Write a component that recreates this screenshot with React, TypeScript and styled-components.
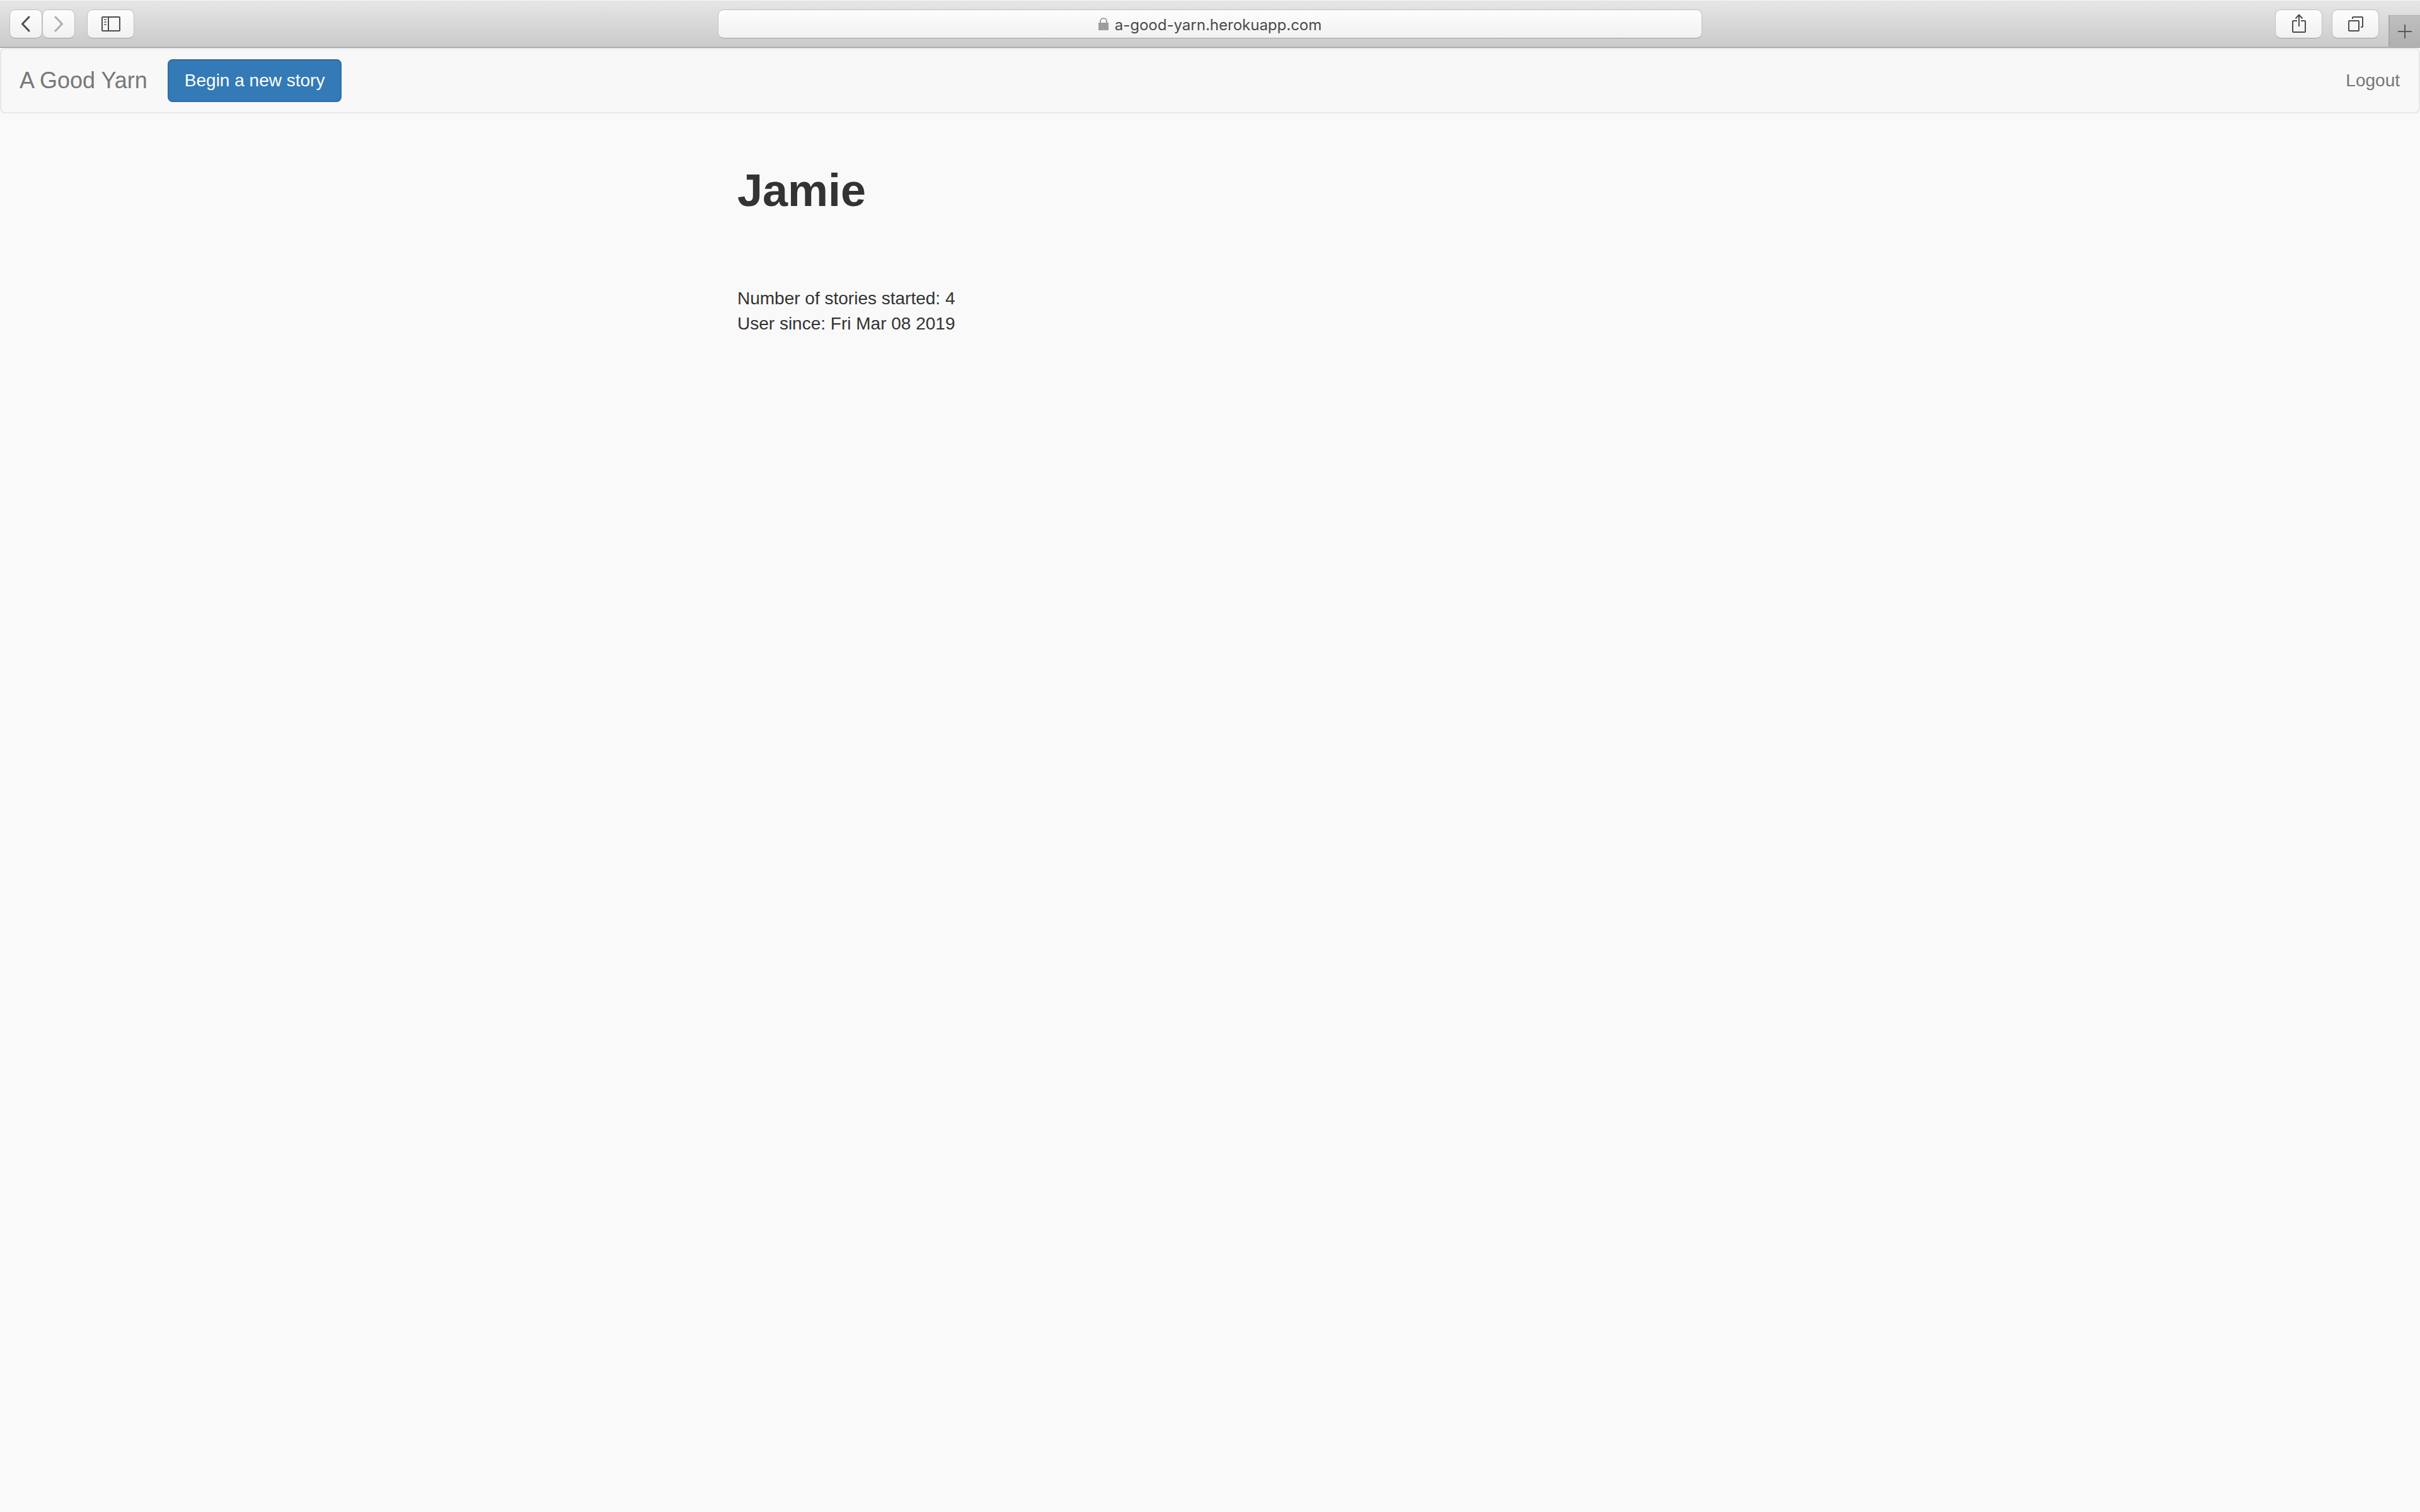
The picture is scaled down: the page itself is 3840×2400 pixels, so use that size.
import React from "react";
import styled, { createGlobalStyle } from "styled-components";

const sans = '"Liberation Sans", Arial, sans-serif';

const GlobalStyle = createGlobalStyle`
  *, *::before, *::after { box-sizing: border-box; }
  body {
    margin: 0;
    background: #f9f9f9;
    color: #333;
    font-family: ${sans};
    font-size: 28px;
    line-height: 40px;
  }
`;

const Toolbar = styled.header`
  display: grid;
  grid-template-columns: minmax(0, 1fr) minmax(0, 1562px) minmax(0, 1fr);
  align-items: center;
  height: 76px;
  background: linear-gradient(#e6e6e6, #cacaca);
  border-top: 1px solid #f5f5f5;
  border-bottom: 1px solid #a0a0a0;
  box-shadow: inset 0 -1px #b8b8b8;
`;

const ToolGroup = styled.div<{ $end?: boolean }>`
  display: flex;
  align-items: center;
  align-self: stretch;
  justify-content: ${(p) => (p.$end ? "flex-end" : "flex-start")};
  gap: ${(p) => (p.$end ? 15 : 19)}px;
  padding-left: 15px;
`;

const History = styled.div`
  display: flex;
`;

const ToolButton = styled.button<{ $width: number }>`
  display: grid;
  place-items: center;
  width: ${(p) => p.$width}px;
  height: 46px;
  padding: 0;
  color: #4d4d4d;
  background: linear-gradient(#fdfdfd, #f1f1f1) padding-box;
  border: 1px solid #c0c0c0;
  border-bottom-color: #a0a0a0;
  border-radius: 9px;

  &:disabled { color: #adadad; }
`;

const NewTab = styled.button`
  display: grid;
  place-items: center;
  align-self: flex-end;
  width: 50px;
  height: 50px;
  margin-bottom: 1px;
  padding: 0;
  color: #5a5a5a;
  background: linear-gradient(#bfbfbf, #afafaf);
  border: solid #a8a8a8;
  border-width: 1px 0 0 2px;
  border-top-color: #b0b0b0;
`;

const AddressBar = styled.label`
  display: flex;
  align-items: center;
  justify-content: center;
  gap: 10px;
  height: 46px;
  color: #9d9d9d;
  background: linear-gradient(#fdfdfd, #f1f1f1) padding-box;
  border: 1px solid #c0c0c0;
  border-bottom-color: #a0a0a0;
  border-radius: 9px;
`;

const Address = styled.input`
  field-sizing: content;
  height: 34px;
  padding: 2px 0 0;
  border: 0;
  outline: 0;
  background: transparent;
  color: #4a4a4a;
  font: 24px/32px Inter, sans-serif;
`;

const Icon = styled.svg<{ $stroke?: number }>`
  display: block;
  fill: none;
  stroke: currentColor;
  stroke-width: ${(p) => p.$stroke ?? 2};
  stroke-linejoin: round;
`;

const Navbar = styled.nav`
  display: flex;
  align-items: center;
  gap: 32px;
  height: 104px;
  padding: 0 30px 0 29px;
  background: #f8f8f8;
  border: 2px solid #e7e7e7;
  border-radius: 8px;
`;

const Brand = styled.a`
  color: #777;
  font-size: 36px;
  text-decoration: none;
`;

const PrimaryButton = styled.button`
  padding: 12px 25px;
  color: #fff;
  background: #337ab7;
  border: 2px solid #2e6da4;
  border-radius: 8px;
  font: 28px/40px ${sans};
`;

const NavLink = styled.a`
  margin-left: auto;
  color: #777;
  text-decoration: none;
`;

const Profile = styled.main`
  max-width: 1500px;
  margin: 82px auto 0;
`;

const Name = styled.h1`
  margin: 0 0 112px;
  font-size: 72px;
  font-weight: 700;
  line-height: 80px;
`;

const Fact = styled.p`
  margin: 0;
`;

export default function App() {
  return (
    <>
      <GlobalStyle />
      <Toolbar>
        <ToolGroup>
          <History>
            <ToolButton $width={52} aria-label="Back">
              <Icon $stroke={3} width="16" height="26" viewBox="0 0 16 26">
                <path d="M13 2 2.500 13 13 24" strokeLinecap="round" />
              </Icon>
            </ToolButton>
            <ToolButton $width={52} aria-label="Forward" disabled>
              <Icon $stroke={3} width="16" height="26" viewBox="0 0 16 26">
                <path d="M3 2 13.500 13 3 24" strokeLinecap="round" />
              </Icon>
            </ToolButton>
          </History>
          <ToolButton $width={75} aria-label="Show sidebar">
            <Icon width="30" height="24" viewBox="0 0 30 24">
              <rect x="1" y="1" width="28" height="22" rx="1" />
              <path d="M11 1v22" />
              <path d="M4 5h4M4 9h4M4 13h4" opacity="0.65" />
            </Icon>
          </ToolButton>
        </ToolGroup>
        <AddressBar>
          <Icon width="16" height="20" viewBox="0 0 16 20">
            <path d="M3 9V6a5 5 0 0 1 10 0v3" />
            <path d="M0 8h16v12H0z" fill="currentColor" stroke="none" />
          </Icon>
          <Address aria-label="Address" defaultValue="a-good-yarn.herokuapp.com" />
        </AddressBar>
        <ToolGroup $end>
          <ToolButton $width={75} aria-label="Share">
            <Icon width="22" height="32" viewBox="0 0 22 32">
              <path d="M8 11H2a1 1 0 0 0-1 1v16a1 1 0 0 0 1 1h18a1 1 0 0 0 1-1V12a1 1 0 0 0-1-1h-6" />
              <path d="M11 20V1.500M5.500 7.500 11 1.500l5.500 6" />
            </Icon>
          </ToolButton>
          <ToolButton $width={75} aria-label="Show all tabs">
            <Icon width="24" height="24" viewBox="0 0 24 24">
              <rect x="1" y="7" width="16" height="16" rx="1" />
              <path d="M7 4V2a1 1 0 0 1 1-1h14a1 1 0 0 1 1 1v14a1 1 0 0 1-1 1h-2" />
            </Icon>
          </ToolButton>
          <NewTab aria-label="New tab">
            <Icon width="22" height="22" viewBox="0 0 22 22">
              <path d="M11 0v22M0 11h22" />
            </Icon>
          </NewTab>
        </ToolGroup>
      </Toolbar>
      <Navbar>
        <Brand href="#">A Good Yarn</Brand>
        <PrimaryButton>Begin a new story</PrimaryButton>
        <NavLink href="#">Logout</NavLink>
      </Navbar>
      <Profile>
        <Name>Jamie</Name>
        <Fact>Number of stories started: 4</Fact>
        <Fact>User since: Fri Mar 08 2019</Fact>
      </Profile>
    </>
  );
}
